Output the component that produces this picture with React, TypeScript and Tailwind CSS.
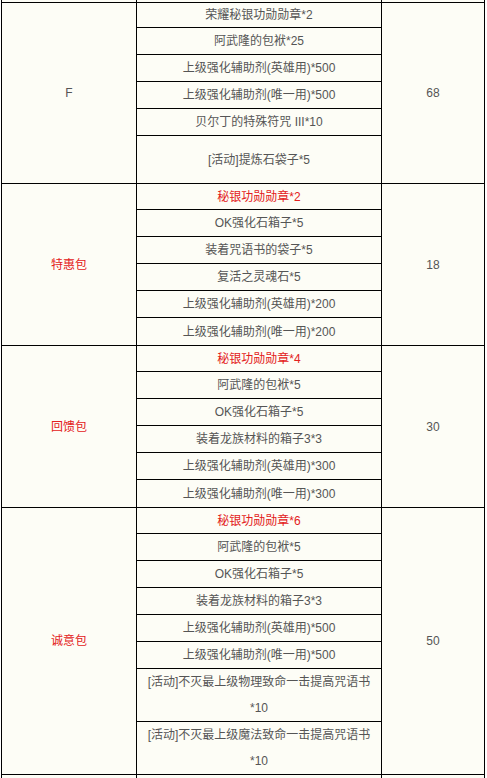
import React from "react"

type Row = { text: string[]; red?: boolean; h: string }
type Group = { name: string; red?: boolean; price: string; rows: Row[] }

const groups: Group[] = [
  {
    name: "F",
    price: "68",
    rows: [
      { text: ["荣耀秘银功勋勋章*2"], h: "h-[25px]" },
      { text: ["阿武隆的包袱*25"], h: "h-[27px]" },
      { text: ["上级强化辅助剂(英雄用)*500"], h: "h-[27px]" },
      { text: ["上级强化辅助剂(唯一用)*500"], h: "h-[27px]" },
      { text: ["贝尔丁的特殊符咒 III*10"], h: "h-[27px]" },
      { text: ["[活动]提炼石袋子*5"], h: "h-[47px]" },
    ],
  },
  {
    name: "特惠包",
    red: true,
    price: "18",
    rows: [
      { text: ["秘银功勋勋章*2"], red: true, h: "h-[26px]" },
      { text: ["OK强化石箱子*5"], h: "h-[27px]" },
      { text: ["装着咒语书的袋子*5"], h: "h-[27px]" },
      { text: ["复活之灵魂石*5"], h: "h-[27px]" },
      { text: ["上级强化辅助剂(英雄用)*200"], h: "h-[27px]" },
      { text: ["上级强化辅助剂(唯一用)*200"], h: "h-[27px]" },
    ],
  },
  {
    name: "回馈包",
    red: true,
    price: "30",
    rows: [
      { text: ["秘银功勋勋章*4"], red: true, h: "h-[26px]" },
      { text: ["阿武隆的包袱*5"], h: "h-[27px]" },
      { text: ["OK强化石箱子*5"], h: "h-[27px]" },
      { text: ["装着龙族材料的箱子3*3"], h: "h-[27px]" },
      { text: ["上级强化辅助剂(英雄用)*300"], h: "h-[27px]" },
      { text: ["上级强化辅助剂(唯一用)*300"], h: "h-[27px]" },
    ],
  },
  {
    name: "诚意包",
    red: true,
    price: "50",
    rows: [
      { text: ["秘银功勋勋章*6"], red: true, h: "h-[26px]" },
      { text: ["阿武隆的包袱*5"], h: "h-[27px]" },
      { text: ["OK强化石箱子*5"], h: "h-[27px]" },
      { text: ["装着龙族材料的箱子3*3"], h: "h-[27px]" },
      { text: ["上级强化辅助剂(英雄用)*500"], h: "h-[27px]" },
      { text: ["上级强化辅助剂(唯一用)*500"], h: "h-[27px]" },
      { text: ["[活动]不灭最上级物理致命一击提高咒语书", "*10"], h: "h-[53px]" },
      { text: ["[活动]不灭最上级魔法致命一击提高咒语书", "*10"], h: "h-[52px]" },
    ],
  },
]

function Spacer({ h }: { h: string }) {
  return (
    <div className={`flex ${h}`}>
      <div className="w-[135px] border-r border-black" />
      <div className="w-[245px] border-r border-black" />
      <div className="flex-1" />
    </div>
  )
}

export default function App() {
  return (
    <div
      className="min-h-screen bg-white pl-[1px] text-[12px] text-[#555]"
      style={{ fontFamily: '"Liberation Sans", "Noto Sans CJK SC", sans-serif' }}
    >
      <div className="w-[484px] border-x border-black bg-[#fdfdf6]">
        <Spacer h="h-[2px]" />
        <div className="border-t border-black">
          {groups.map((g) => (
            <div key={g.name} className="flex border-b border-black">
              <div
                className={`flex w-[135px] items-center justify-center border-r border-black ${
                  g.red ? "text-[#e32020]" : ""
                }`}
              >
                {g.name}
              </div>
              <div className="flex w-[245px] flex-col divide-y divide-black border-r border-black">
                {g.rows.map((r, i) => (
                  <div
                    key={i}
                    className={`flex flex-col items-center justify-center leading-[26px] ${r.h} ${
                      r.red ? "text-[#e32020]" : ""
                    }`}
                  >
                    {r.text.map((t) => (
                      <span key={t}>{t}</span>
                    ))}
                  </div>
                ))}
              </div>
              <div className="flex flex-1 items-center justify-center">{g.price}</div>
            </div>
          ))}
        </div>
        <Spacer h="h-[20px]" />
      </div>
    </div>
  )
}
